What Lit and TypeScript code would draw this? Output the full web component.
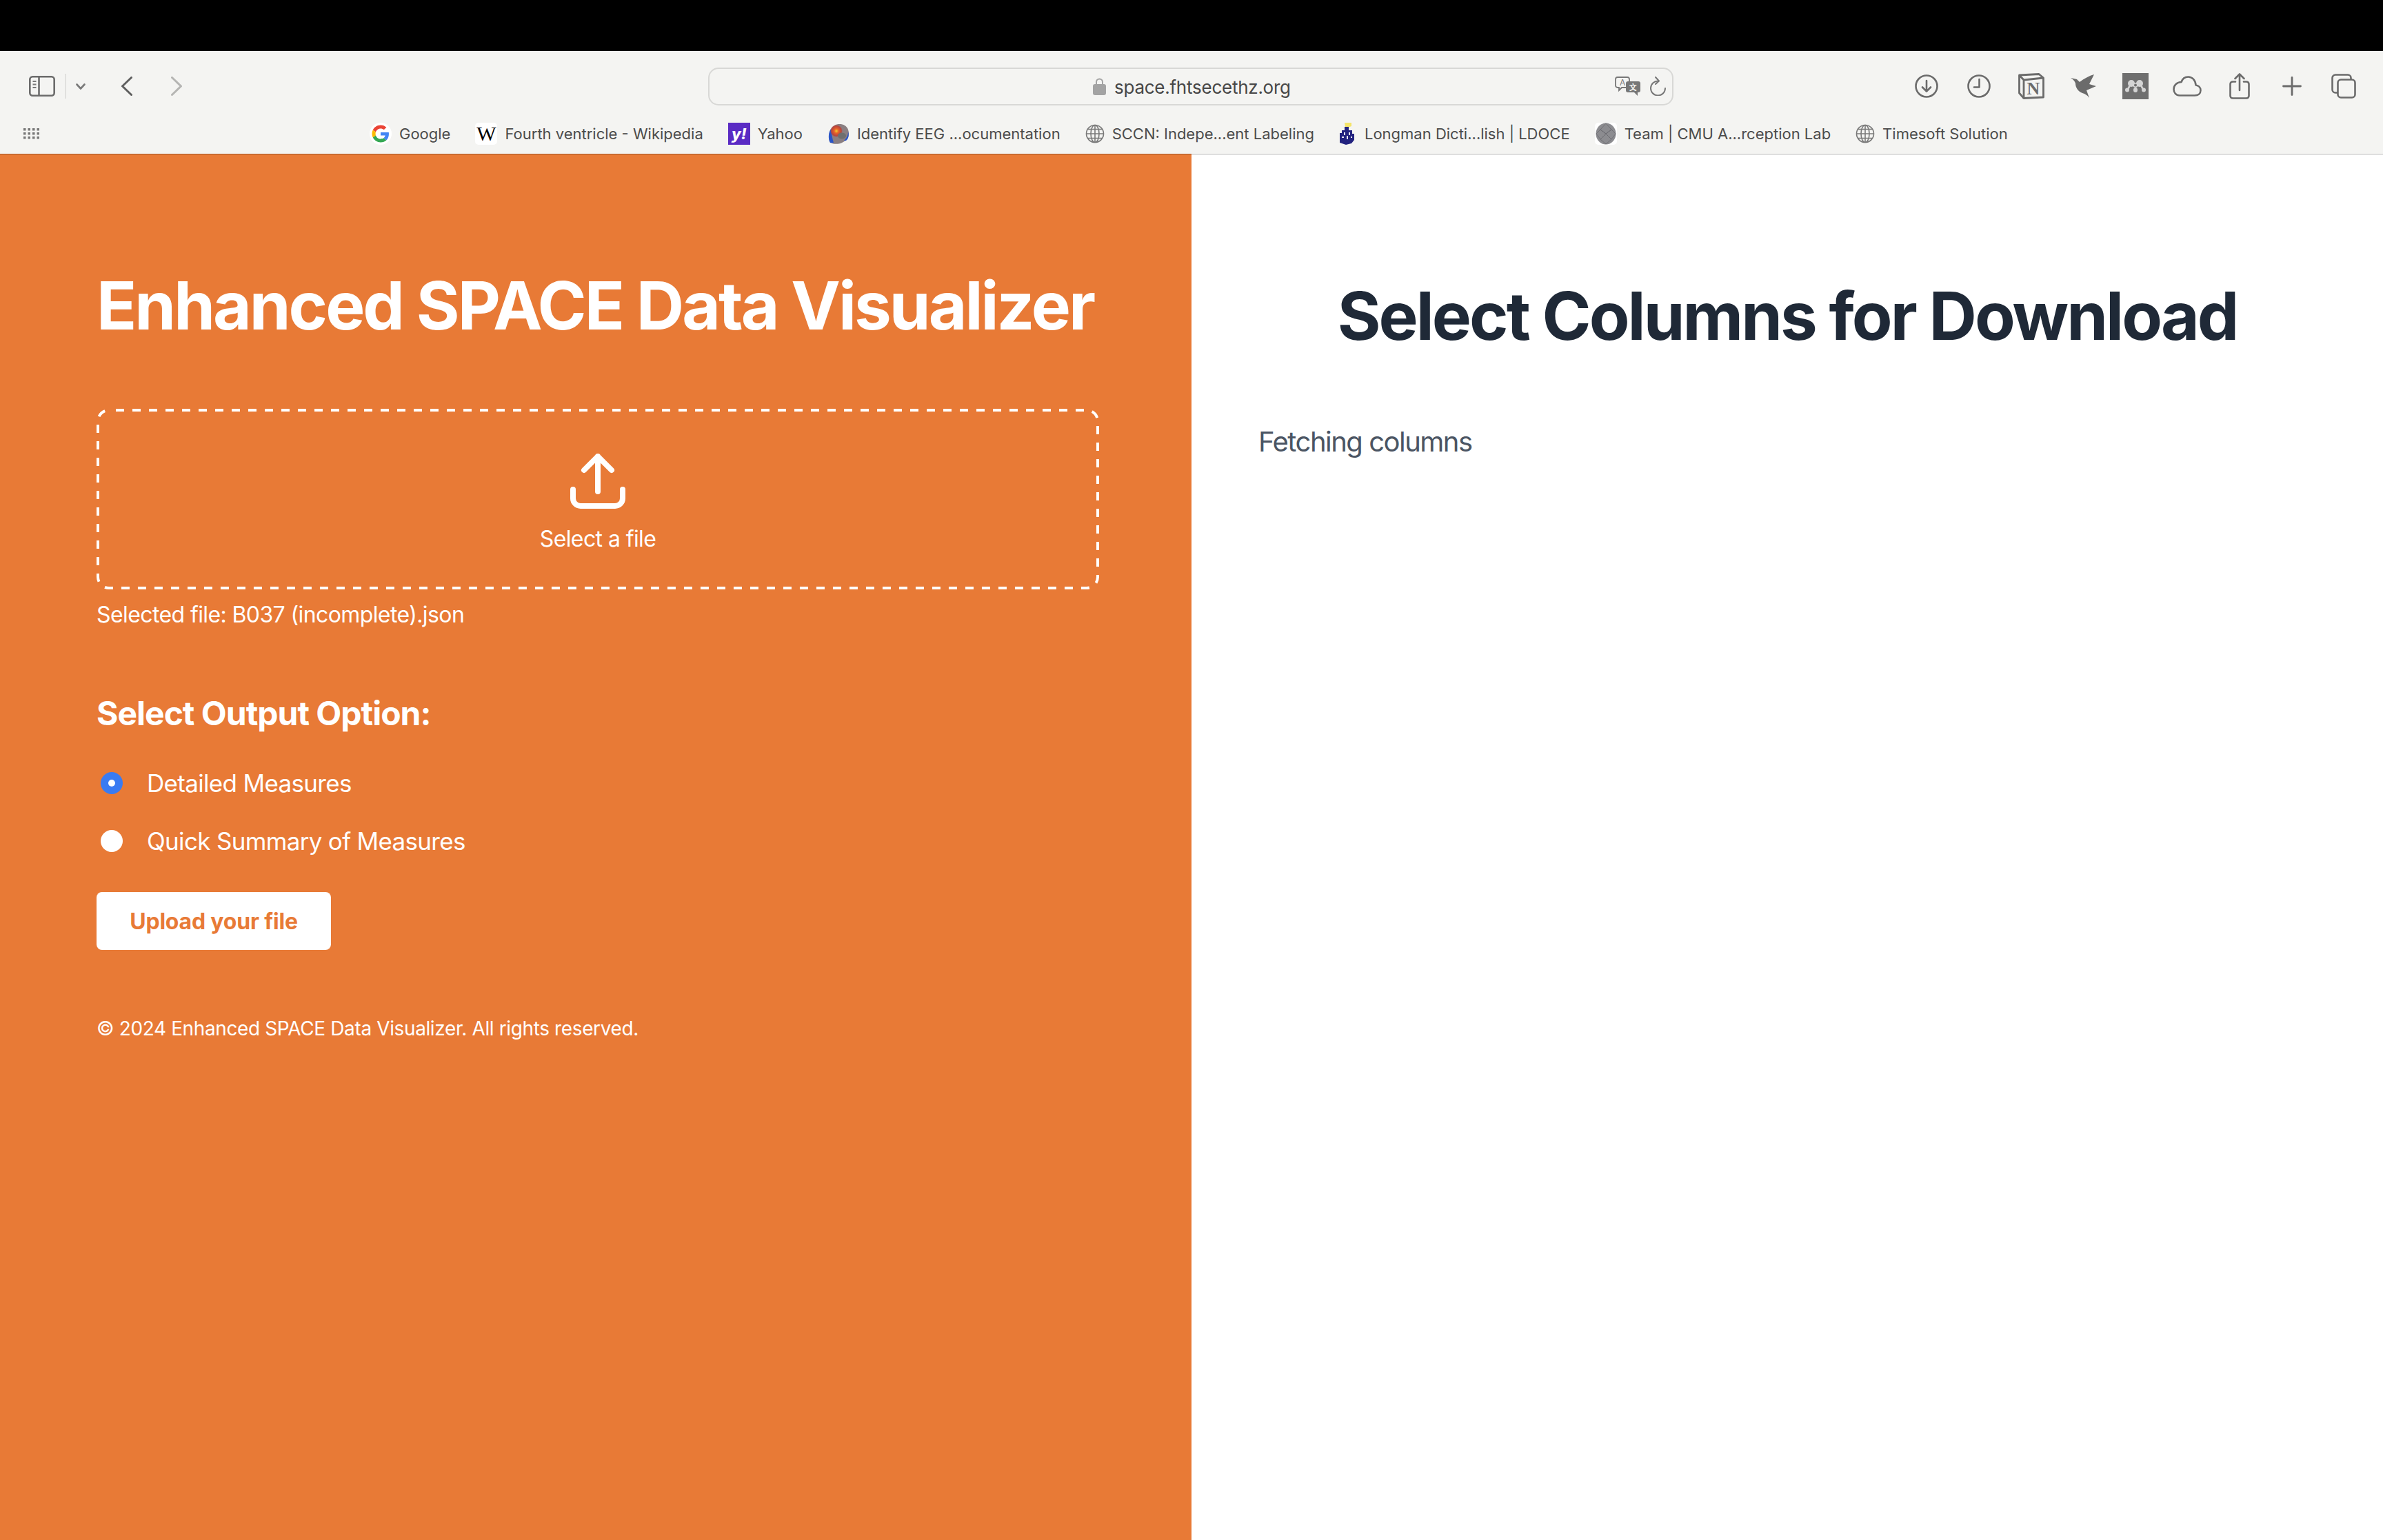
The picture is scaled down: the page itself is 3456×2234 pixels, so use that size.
import { LitElement, html, css, svg } from "lit";
import { customElement } from "lit/decorators.js";

const stroke = "#6b6b6b";

const globe = html`<svg class="fav globe" viewBox="0 0 28 28" fill="none" stroke="#7a7a7a" stroke-width="1.6">
  <circle cx="14" cy="14" r="12.5"></circle>
  <ellipse cx="14" cy="14" rx="6" ry="12.5"></ellipse>
  <path d="M14 1.5v25M1.5 14h25M3.5 7.5h21M3.5 20.5h21"></path>
</svg>`;

const googleIcon = html`<svg class="fav tile round" viewBox="-6.7 -6.7 61.4 61.4">
  <path fill="#EA4335" d="M24 9.5c3.54 0 6.71 1.22 9.21 3.6l6.85-6.85C35.9 2.38 30.47 0 24 0 14.62 0 6.51 5.38 2.56 13.22l7.98 6.19C12.43 13.72 17.74 9.5 24 9.5z"></path>
  <path fill="#4285F4" d="M46.98 24.55c0-1.57-.15-3.09-.38-4.55H24v9.02h12.94c-.58 2.96-2.26 5.48-4.78 7.18l7.73 6c4.51-4.18 7.09-10.36 7.09-17.65z"></path>
  <path fill="#FBBC05" d="M10.53 28.59c-.48-1.45-.76-2.99-.76-4.59s.27-3.14.76-4.59l-7.98-6.19C.92 16.46 0 20.12 0 24c0 3.88.92 7.54 2.56 10.78l7.97-6.19z"></path>
  <path fill="#34A853" d="M24 48c6.48 0 11.93-2.13 15.89-5.81l-7.73-6c-2.15 1.45-4.92 2.3-8.16 2.3-6.26 0-11.57-4.22-13.47-9.91l-7.98 6.19C6.51 42.62 14.62 48 24 48z"></path>
</svg>`;

const wikiIcon = html`<span class="fav tile wiki">W</span>`;
const yahooIcon = html`<span class="fav yahoo">y!</span>`;

const eegIcon = html`<svg class="fav" viewBox="0 0 32 32">
  <defs>
    <radialGradient id="eeg-hot">
      <stop offset="0" stop-color="#f2d52e"></stop>
      <stop offset=".35" stop-color="#e8622a"></stop>
      <stop offset=".8" stop-color="#b8443c"></stop>
      <stop offset="1" stop-color="#b8443c" stop-opacity="0"></stop>
    </radialGradient>
  </defs>
  <path fill="#8a7f82" d="M4 29C0 22 2 9 10 4c7-4 17-2 20 6 2 6 1 11-3 15-5 5-14 8-23 4z"></path>
  <path fill="#2a55c8" d="M4 29C1 24 1 15 5 9c1 7 2 14 4 20zM24 26c3-3 6-7 6-13 2 6 0 11-3 13z"></path>
  <circle cx="13" cy="12" r="9" fill="url(#eeg-hot)"></circle>
  <ellipse cx="21" cy="19" rx="6" ry="4.500" fill="#6f6f6f"></ellipse>
</svg>`;

const longmanIcon = html`<svg class="fav longman" viewBox="0 0 23 32">
  <path fill="#f4e46a" d="M8 0h10v5l-5 2H9z"></path>
  <path fill="#23237f" d="M8 6h6v5h5v5h3v9l-4 5-8 2-9-3V15h3v-4h4z"></path>
  <path fill="#e8e8f2" d="M7 14h2v4H7zM14 14h2v4h-2zM4 20h3v2H4zM11 19h2v5h-2zM17 20h2v2h-2z"></path>
</svg>`;

const sphereIcon = html`<svg class="fav tile" viewBox="0 0 32 32">
  <ellipse cx="16" cy="16" rx="14.5" ry="15.5" fill="#8c8c90"></ellipse>
  <path fill="none" stroke="#6a6a6e" stroke-width=".8" d="M16 1 8 10l8 6 8-6zM8 10 2 16l6 8 8-8zM24 10l6 6-6 8-8-8zM8 24l8 7 8-7-8-8z"></path>
</svg>`;

const bookmarks = [
  { icon: googleIcon, label: "Google" },
  { icon: wikiIcon, label: "Fourth ventricle - Wikipedia" },
  { icon: yahooIcon, label: "Yahoo" },
  { icon: eegIcon, label: "Identify EEG ...ocumentation" },
  { icon: globe, label: "SCCN: Indepe...ent Labeling" },
  { icon: longmanIcon, label: "Longman Dicti...lish | LDOCE" },
  { icon: sphereIcon, label: "Team | CMU A...rception Lab" },
  { icon: globe, label: "Timesoft Solution" },
];

const toolIcons = [
  // downloads
  svg`<svg width="36" height="36" viewBox="0 0 36 36" fill="none" stroke=${stroke} stroke-width="2.6" stroke-linecap="round" stroke-linejoin="round">
    <circle cx="18" cy="18" r="15.5"></circle><path d="M18 10v15M12 19.5l6 6 6-6"></path></svg>`,
  // history
  svg`<svg width="36" height="36" viewBox="0 0 36 36" fill="none" stroke=${stroke} stroke-width="2.6" stroke-linecap="round" stroke-linejoin="round">
    <circle cx="18" cy="18" r="15.5"></circle><path d="M18.5 8v11.5H11"></path></svg>`,
  // notion
  svg`<svg width="38" height="38" viewBox="0 0 38 38" fill="none" stroke=${stroke} stroke-width="2.8" stroke-linejoin="round">
    <path d="M1.500 3 30 1.500 36.500 7v28L8 36.500 1.500 29z"></path><path d="M1.500 3 8 10l28.500-3M8 10v26.500"></path>
    <text x="22" y="31" text-anchor="middle" font-family="Liberation Serif, serif" font-weight="700" font-size="26" fill=${stroke} stroke="none">N</text></svg>`,
  // bird
  svg`<svg width="38" height="36" viewBox="0 0 38 36" fill=${stroke}>
    <path d="M1 6l9 2c1 1 3 3 4 4 6-5 14-9 21-11l-7 14 10 3-14 6 4 11c-3-4-6-6-10-7-6-2-10-8-10-14-1-3-3-6-7-8z"></path></svg>`,
  // mendeley
  svg`<svg width="38" height="38" viewBox="0 0 38 38">
    <rect width="38" height="38" fill="#6f6f6f"></rect>
    <g fill="#d4d4d4"><circle cx="13" cy="15" r="5"></circle><circle cx="25" cy="15" r="5"></circle>
    <circle cx="7" cy="24.500" r="3"></circle><ellipse cx="19" cy="24.500" rx="3" ry="3.500"></ellipse><circle cx="31" cy="24.500" r="3"></circle></g>
    <path fill="none" stroke="#d4d4d4" stroke-width="2.600" d="M7 24c2-1 3-4 4-7M31 24c-2-1-3-4-4-7"></path>
    <circle cx="19" cy="17.500" r="2.800" fill="#6f6f6f" stroke="#d4d4d4" stroke-width="1.600"></circle></svg>`,
  // cloud
  svg`<svg width="42" height="30" viewBox="0 0 42 30" fill="none" stroke=${stroke} stroke-width="2.6" stroke-linejoin="round">
    <path d="M10 28.5h22c5 0 8.5-3 8.5-7.5 0-4-3-7-7-7.5C33 6 28 1.5 22.500 1.500 17.500 1.500 14 4.500 12.500 9 6 9 1.500 14 1.500 19.500c0 5 3.500 9 8.500 9z"></path></svg>`,
  // share
  svg`<svg width="30" height="38" viewBox="0 0 30 38" fill="none" stroke=${stroke} stroke-width="2.6" stroke-linecap="round" stroke-linejoin="round">
    <path d="M9 12.500H5a3.500 3.500 0 0 0-3.500 3.500v17a3.500 3.500 0 0 0 3.500 3.500h20a3.500 3.500 0 0 0 3.500-3.500V16a3.500 3.500 0 0 0-3.500-3.500h-4"></path>
    <path d="M15 25V1.500M8.500 8 15 1.500 21.500 8"></path></svg>`,
  // new tab
  svg`<svg width="28" height="28" viewBox="0 0 28 28" fill="none" stroke=${stroke} stroke-width="2.8" stroke-linecap="round">
    <path d="M14 1.500v25M1.500 14h25"></path></svg>`,
  // tabs
  svg`<svg width="36" height="36" viewBox="0 0 36 36" fill="none" stroke=${stroke} stroke-width="2.6" stroke-linejoin="round">
    <rect x="9.500" y="8.500" width="25" height="26" rx="4.500"></rect>
    <path d="M9.500 27.500H6a4.500 4.500 0 0 1-4.500-4.500V6A4.500 4.500 0 0 1 6 1.500h18A4.500 4.500 0 0 1 28.500 6v2.500"></path></svg>`,
];

@customElement("app-root")
export class AppRoot extends LitElement {
  static styles = css`
    :host {
      display: flex;
      flex-direction: column;
      height: 100vh;
      font-family: Inter, "Liberation Sans", sans-serif;
      background: #fff;
    }

    .topbar {
      height: 74px;
      background: #000;
    }

    .chrome {
      background: #f4f4f2;
      color: #4c4c4c;
    }

    .toolbar {
      display: grid;
      grid-template-columns: 1027px 1400px 1fr;
      align-items: center;
      height: 102px;
    }

    .nav {
      display: flex;
      align-items: center;
      padding-left: 42px;
    }

    .divider {
      width: 2px;
      height: 36px;
      margin: 0 14px 0 14px;
      background: #e0e0de;
    }

    .back {
      margin-left: 52px;
    }

    .forward {
      margin-left: 56px;
    }

    .url {
      display: flex;
      align-items: center;
      height: 55px;
      box-sizing: border-box;
      padding: 0 9px 0 556px;
      border: 2px solid #d8d8d6;
      border-radius: 15px;
      font-size: 26px;
      letter-spacing: -0.25px;
      color: #474747;
    }

    .lock {
      margin-right: 12px;
    }

    .address {
      margin-top: 2px;
    }

    .url-actions {
      display: flex;
      align-items: center;
      gap: 12px;
      margin-left: auto;
    }

    .tools {
      display: flex;
      justify-content: flex-end;
      padding-right: 19px;
    }

    .tool {
      display: flex;
      align-items: center;
      justify-content: center;
      width: 75.6px;
      height: 40px;
    }

    .bookmarks {
      display: flex;
      align-items: center;
      height: 36px;
      padding: 0 0 11px 34px;
      font-size: 22px;
      white-space: nowrap;
    }

    .list {
      display: flex;
      gap: 36px;
      margin-left: 479px;
    }

    .bookmark {
      display: flex;
      align-items: center;
      gap: 11px;
    }

    .fav {
      display: block;
      flex: none;
      width: 32px;
      height: 32px;
    }

    .fav.globe {
      width: 28px;
      height: 28px;
    }

    .fav.longman {
      width: 23px;
      margin-right: 3px;
    }

    .tile {
      background: #fff;
      border-radius: 5px;
    }

    .tile.round {
      border-radius: 50%;
    }

    .wiki {
      font-family: "Liberation Serif", serif;
      font-size: 30px;
      line-height: 32px;
      text-align: center;
      color: #000;
    }

    .yahoo {
      background: #5a2bc4;
      color: #fff;
      font-size: 22px;
      font-weight: 800;
      line-height: 32px;
      text-align: center;
      font-style: italic;
    }

    main {
      display: grid;
      grid-template-columns: minmax(0, 1fr) minmax(0, 1fr);
      flex: 1;
    }

    .panel {
      border-top: 2px solid rgba(0, 0, 0, 0.13);
    }

    .left {
      padding: 168px 134px 0 140px;
      background: #e87a36;
      color: #fff;
    }

    h1 {
      margin: 0;
      font-size: 96px;
      font-weight: 700;
      line-height: 100px;
      letter-spacing: -2.95px;
      white-space: nowrap;
    }

    .drop {
      position: relative;
      display: flex;
      flex-direction: column;
      align-items: center;
      gap: 24px;
      height: 262px;
      box-sizing: border-box;
      margin-top: 100px;
      padding-top: 65px;
      font-size: 32px;
      line-height: 40px;
      letter-spacing: -0.6px;
    }

    .dash {
      position: absolute;
      inset: 0;
      width: 100%;
      height: 100%;
    }

    .dash rect {
      x: 2px;
      y: 2px;
      width: calc(100% - 4px);
      height: calc(100% - 4px);
      rx: 16px;
      fill: none;
      stroke: #fff;
      stroke-width: 4px;
      stroke-dasharray: 12px 12px;
      stroke-dashoffset: -10px;
    }

    .selected {
      margin-top: 17px;
      font-size: 32px;
      line-height: 40px;
      letter-spacing: -0.6px;
    }

    h2 {
      margin: 95px 0 0;
      font-size: 48px;
      font-weight: 700;
      line-height: 56px;
      letter-spacing: -1px;
    }

    .options {
      display: flex;
      flex-direction: column;
      gap: 40px;
      margin-top: 51px;
    }

    .option {
      display: flex;
      align-items: center;
      gap: 35px;
      padding-left: 6px;
      font-size: 35px;
      line-height: 44px;
      letter-spacing: -0.68px;
    }

    .radio {
      display: flex;
      align-items: center;
      justify-content: center;
      width: 32px;
      height: 32px;
      border-radius: 50%;
      background: #fff;
    }

    .radio.on {
      background: #3a7bf2;
    }

    .radio.on::after {
      content: "";
      width: 10px;
      height: 10px;
      border-radius: 50%;
      background: #fff;
    }

    button {
      display: block;
      width: 340px;
      height: 84px;
      margin-top: 52px;
      padding: 0;
      border: none;
      border-radius: 8px;
      background: #fff;
      color: #e87a36;
      font: 700 32px Inter, "Liberation Sans", sans-serif;
      letter-spacing: -0.2px;
    }

    footer {
      margin-top: 96px;
      font-size: 28px;
      line-height: 36px;
      letter-spacing: -0.38px;
    }

    .right {
      padding: 183px 0 0 97px;
      background: #fff;
    }

    .right h1 {
      color: #1f2937;
      text-align: center;
      padding-right: 97px;
    }

    .status {
      margin-top: 108px;
      font-size: 40px;
      line-height: 50px;
      letter-spacing: -1.5px;
      color: #4b5563;
    }
  `;

  render() {
    return html`
      <div class="topbar"></div>
      <div class="chrome">
        <div class="toolbar">
          <div class="nav">
            <svg width="38" height="30" viewBox="0 0 38 30" fill="none" stroke=${stroke} stroke-width="2.600">
              <rect x="1.300" y="1.300" width="35.400" height="27.400" rx="4"></rect>
              <path d="M14.500 1.300v27.400"></path>
              <path d="M5.500 8h5M5.500 12.500h5M5.500 17h5" stroke-width="2" stroke="#7a7a7a"></path>
            </svg>
            <span class="divider"></span>
            <svg width="14" height="9" viewBox="0 0 14 9" fill="none" stroke="#7a7a7a" stroke-width="2.600" stroke-linecap="round" stroke-linejoin="round">
              <path d="M1.500 1.500 7 7.500l5.500-6"></path>
            </svg>
            <svg class="back" width="16" height="28" viewBox="0 0 16 28" fill="none" stroke="#5f5f5f" stroke-width="3" stroke-linecap="round" stroke-linejoin="round">
              <path d="M14.500 1.500 1.500 14l13 12.500"></path>
            </svg>
            <svg class="forward" width="16" height="28" viewBox="0 0 16 28" fill="none" stroke="#b5b5b3" stroke-width="3" stroke-linecap="round" stroke-linejoin="round">
              <path d="M1.500 1.500 14.500 14l-13 12.500"></path>
            </svg>
          </div>
          <div class="url">
            <svg class="lock" width="19" height="25" viewBox="0 0 19 25" fill="#a3a3a3">
              <path d="M5 10V6a4.500 4.500 0 0 1 9 0v4" fill="none" stroke="#a3a3a3" stroke-width="2"></path>
              <rect y="9" width="19" height="16" rx="3"></rect>
            </svg>
            <span class="address">space.fhtsecethz.org</span>
            <span class="url-actions">
              <svg width="38" height="28" viewBox="0 0 38 28">
                <path d="M4 1h14a3 3 0 0 1 3 3v9a3 3 0 0 1-3 3H10l-4 4v-4H4a3 3 0 0 1-3-3V4a3 3 0 0 1 3-3z" fill="none" stroke="#777" stroke-width="1.800"></path>
                <text x="11" y="13" text-anchor="middle" font-size="12" fill="#777" font-family="Inter, sans-serif">A</text>
                <path d="M19 7h15a3 3 0 0 1 3 3v10a3 3 0 0 1-3 3h-1v5l-5-5h-9a3 3 0 0 1-3-3V10a3 3 0 0 1 3-3z" fill="#777"></path>
                <text x="26" y="20" text-anchor="middle" font-size="11" font-weight="700" fill="#f4f4f2" font-family="Noto Sans CJK SC, sans-serif">文</text>
              </svg>
              <svg width="24" height="28" viewBox="0 0 24 28" fill="none" stroke="#777" stroke-width="2" stroke-linecap="round" stroke-linejoin="round">
                <path d="M13 6.500A10.500 10.500 0 1 0 23 17"></path>
                <path d="M9 1l5 5.500L9 11"></path>
              </svg>
            </span>
          </div>
          <div class="tools">${toolIcons.map((i) => html`<span class="tool">${i}</span>`)}</div>
        </div>
        <div class="bookmarks">
          <svg width="23" height="16" viewBox="0 0 23 16" fill="#777">
            ${[0, 6.500, 13, 19.500].map((x) => [0, 6, 12].map((y) => svg`<rect x=${x} y=${y} width="3.500" height="3.500"></rect>`))}
          </svg>
          <div class="list">
            ${bookmarks.map((b) => html`<span class="bookmark">${b.icon}<span>${b.label}</span></span>`)}
          </div>
        </div>
      </div>
      <main>
        <section class="panel left">
          <h1>Enhanced SPACE Data Visualizer</h1>
          <div class="drop">
            <svg class="dash"><rect></rect></svg>
            <svg width="80" height="80" viewBox="0 0 80 80" fill="none" stroke="#fff" stroke-width="8" stroke-linecap="round" stroke-linejoin="round">
              <path d="M40 4v51M20 24 40 4l20 20"></path>
              <path d="M4 52v13a11 11 0 0 0 11 11h50a11 11 0 0 0 11-11V52"></path>
            </svg>
            <span>Select a file</span>
          </div>
          <div class="selected">Selected file: B037 (incomplete).json</div>
          <h2>Select Output Option:</h2>
          <div class="options">
            <div class="option"><span class="radio on"></span>Detailed Measures</div>
            <div class="option"><span class="radio"></span>Quick Summary of Measures</div>
          </div>
          <button>Upload your file</button>
          <footer>© 2024 Enhanced SPACE Data Visualizer. All rights reserved.</footer>
        </section>
        <section class="panel right">
          <h1>Select Columns for Download</h1>
          <div class="status">Fetching columns</div>
        </section>
      </main>
    `;
  }
}
